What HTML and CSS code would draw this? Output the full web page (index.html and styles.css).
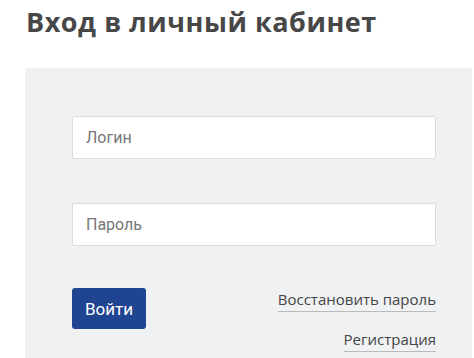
FILE: index.html
```html
<!DOCTYPE html>
<html lang="ru">
<head>
<meta charset="utf-8">
<title>Вход в личный кабинет</title>
<link rel="stylesheet" href="styles.css">
</head>
<body>
<h1 class="title">Вход в личный кабинет</h1>
<div class="panel">
  <form class="form">
    <input class="field" type="text" placeholder="Логин">
    <input class="field" type="password" placeholder="Пароль">
    <div class="actions">
      <button class="btn" type="button">Войти</button>
      <div class="links">
        <a class="link" href="#">Восстановить пароль</a>
        <a class="link" href="#">Регистрация</a>
      </div>
    </div>
  </form>
</div>
</body>
</html>
```
FILE: styles.css
```css
html, body {
  margin: 0;
  padding: 0;
  background: #ffffff;
}
body {
  font-family: "Open Sans", "Liberation Sans", sans-serif;
  color: #454545;
}
.title {
  margin: 0;
  padding: 4px 0 0 26px;
  font-family: "Open Sans", "Liberation Sans", sans-serif;
  font-weight: 700;
  font-size: 27px;
  line-height: 36px;
  color: #474747;
  letter-spacing: 0.55px;
}
.panel {
  margin: 28px 2px 0 25px;
  background: #eff1f2;
  padding: 48px 36px 6px 47px;
}
.form {
  display: flex;
  flex-direction: column;
  gap: 44px;
}
.field {
  box-sizing: border-box;
  width: 100%;
  height: 43px;
  margin: 0;
  border: 1px solid #dadcdd;
  border-radius: 2px;
  background: #ffffff;
  padding: 0 13px;
  font-family: "Roboto", "Liberation Sans", sans-serif;
  font-size: 16px;
  color: #333;
  outline: none;
}
.field::placeholder {
  color: #767676;
}
.actions {
  display: flex;
  justify-content: space-between;
  align-items: flex-start;
  margin-top: -2px;
}
.btn {
  width: 74px;
  height: 41px;
  border: 0;
  border-radius: 3px;
  background: #1f4592;
  color: #ffffff;
  font-family: "Roboto", "Liberation Sans", sans-serif;
  font-size: 17px;
  padding: 0;
}
.links {
  display: flex;
  flex-direction: column;
  align-items: flex-end;
  gap: 17px;
  padding-top: 1px;
}
.link {
  font-family: "Open Sans", "Liberation Sans", sans-serif;
  font-size: 15px;
  line-height: 20px;
  color: #454545;
  text-decoration: none;
  border-bottom: 1px solid #b9bcbe;
  padding-bottom: 2px;
}
```
